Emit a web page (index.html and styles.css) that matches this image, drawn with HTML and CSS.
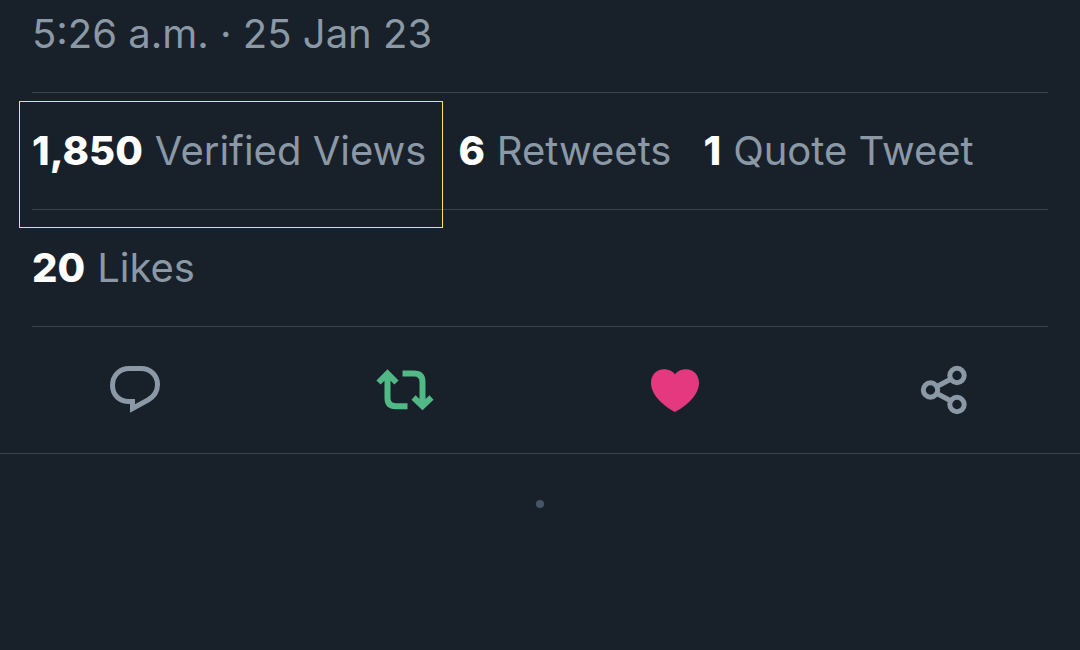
FILE: index.html
```html
<!DOCTYPE html>
<html lang="en">
<head>
<meta charset="utf-8">
<meta name="viewport" content="width=device-width, initial-scale=1">
<title>Tweet</title>
<link rel="stylesheet" href="styles.css">
</head>
<body>
<main class="tweet">
  <div class="row date"><time datetime="2023-01-25T05:26">5:26 a.m. · 25 Jan 23</time></div>
  <div class="row stats">
    <a class="stat highlighted" href="#views"><strong>1,850</strong><span>Verified Views</span></a>
    <a class="stat" href="#retweets"><strong>6</strong><span>Retweets</span></a>
    <a class="stat" href="#quotes"><strong>1</strong><span>Quote Tweet</span></a>
  </div>
  <div class="row stats">
    <a class="stat" href="#likes"><strong>20</strong><span>Likes</span></a>
  </div>
  <div class="actions">
    <button class="action" type="button" aria-label="Reply">
      <svg viewBox="0 0 90 80"><path d="M42.500 51.500H39C29 51.500 22.500 44.500 22.500 35.500C22.500 25.500 29.500 18.500 39.500 18.500H51C60.500 18.500 67.500 25.500 67.500 34.500C67.500 41.500 64 46.500 58 50L42.500 58.500V49" fill="none" stroke="currentColor" stroke-width="5"/></svg>
    </button>
    <button class="action retweeted" type="button" aria-label="Retweet">
      <svg viewBox="0 0 90 80" fill="none" stroke="currentColor" stroke-width="6"><path d="M18.500 32.500L27.500 23.500L36.500 32.500M27.500 24V48Q27.500 56.200 35.500 56.200H47.500M42.500 23.500H54Q62.500 23.500 62.500 32V55M53.500 47.500L62.500 56L71.500 47.500"/></svg>
    </button>
    <button class="action liked" type="button" aria-label="Like">
      <svg viewBox="0 0 90 80"><path d="M45 62C38 58.500 21 47 21 33C21 25 26.500 19.300 34 19.300C39 19.300 43 21.500 45 24.500C47 21.500 51 19.300 56 19.300C63.500 19.300 69 25 69 33C69 47 52 58.500 45 62Z" fill="currentColor"/></svg>
    </button>
    <button class="action" type="button" aria-label="Share">
      <svg viewBox="0 0 90 80" fill="none" stroke="currentColor" stroke-width="5"><circle cx="30.500" cy="40" r="7.200"/><circle cx="57" cy="25.500" r="7.200"/><circle cx="57" cy="54.500" r="7.200"/><path d="M37 36.500L51 29M37 43.500L51 51"/></svg>
    </button>
  </div>
  <div class="end"><span class="dot"></span></div>
</main>
</body>
</html>
```
FILE: styles.css
```css
* { box-sizing: border-box; }
body {
  margin: 0;
  background: #18202a;
  color: #8b98a5;
  font: 400 40px/48px Inter, "Liberation Sans", sans-serif;
}
.row {
  margin: 0 32px;
  padding: 34px 0;
  border-bottom: 1px solid #3a444e;
}
.date { padding-top: 10px; }
.stats { display: flex; flex-wrap: wrap; gap: 32px; }
.stat {
  display: flex;
  gap: 12px;
  color: inherit;
  text-decoration: none;
  white-space: nowrap;
}
.stat strong { color: #fff; font-weight: 800; }
.highlighted { position: relative; }
.highlighted::after {
  content: "";
  position: absolute;
  inset: -26px -17px -53px -13px;
  border: 1px solid #f2e84e;
}
.actions {
  display: grid;
  grid-template-columns: repeat(4, 1fr);
  padding: 23px 0;
  border-bottom: 1px solid #3a444e;
}
.action {
  display: flex;
  justify-content: center;
  padding: 0;
  border: 0;
  background: none;
  color: #8b98a5;
}
.action svg { width: 90px; height: 80px; }
.retweeted { color: #51b985; }
.liked { color: #e5397f; }
.end { display: flex; justify-content: center; padding: 46px 0; }
.dot { width: 8px; height: 8px; border-radius: 50%; background: #475569; }
```
